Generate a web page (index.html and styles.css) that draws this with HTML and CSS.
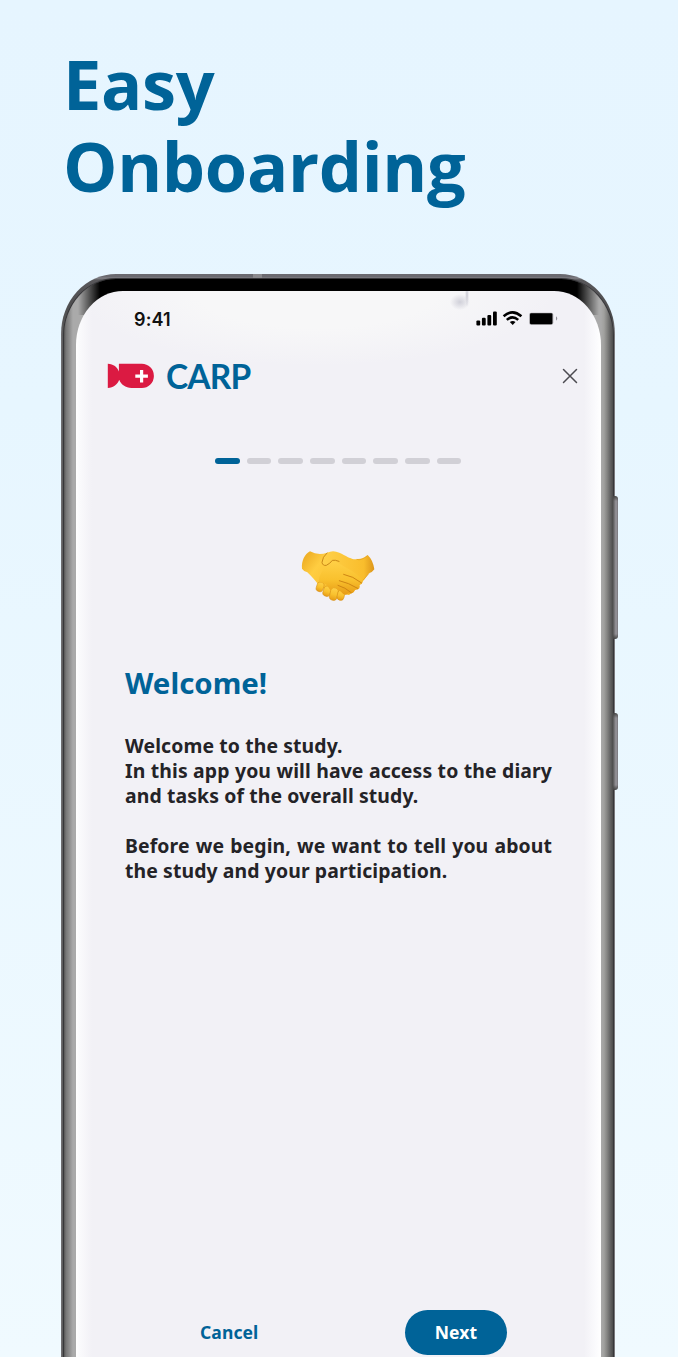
FILE: index.html
```html
<!DOCTYPE html>
<html lang="en">
<head>
<meta charset="utf-8">
<title>CARP – Easy Onboarding</title>
<link rel="stylesheet" href="styles.css">
</head>
<body>
<main class="poster">
  <h1 class="headline">Easy<br>Onboarding</h1>
  <div class="phone">
    <span class="side-key volume"></span>
    <span class="side-key power"></span>
    <span class="antenna"></span>
    <div class="bezel">
      <div class="screen">
        <div class="statusbar">
          <span class="clock">9:41</span>
          <svg class="status-icons" width="84" height="18" viewBox="0 0 84 18">
            <rect x="1.4" y="11.5" width="3.8" height="5" rx="1.1"/>
            <rect x="6.9" y="8.8" width="3.8" height="7.7" rx="1.1"/>
            <rect x="12.4" y="6" width="3.8" height="10.5" rx="1.1"/>
            <rect x="18" y="2.4" width="3.8" height="14.1" rx="1.1"/>
            <g fill="none" stroke="#000" stroke-width="2.5"><path d="M28.6 7.3Q37.5-.6 46.4 7.3"/><path d="M31.8 10.9Q37.5 5.8 43.2 10.9"/></g>
            <path d="M34.8 13Q37.7 11 40.5 13L37.7 16Z"/>
            <rect x="54.1" y="3.8" width="24.2" height="12" rx="2" fill="#aaa9ad"/>
            <rect x="55" y="4.3" width="22.4" height="11" rx="1.2"/>
            <path d="M81 7.3Q83.5 9.5 81 11.7Z" fill="#929198"/>
          </svg>
        </div>
        <header class="appbar">
          <svg class="fish" width="48" height="26" viewBox="0 0 48 26">
            <path fill="#db1a42" d="M.8.8C6.500 1.100 10.400 4.200 11.900 8.600V.8H34.800A12.100 12.100 0 0 1 34.800 25H24.500C18.500 25 14 21.500 12.200 16.800C10.500 21.500 6.500 24.700.8 25Z"/>
            <path fill="#fff" d="M33 7h3.200v4.500H40.900v3.300H36.200v4.700H33v-4.700H28.300v-3.300H33Z"/>
          </svg>
          <span class="brand">CARP</span>
          <svg class="close" width="16" height="16" viewBox="0 0 16 16"><path d="M1.5 1.500l13 13M14.500 1.500l-13 13"/></svg>
        </header>
        <div class="steps"><i class="step active"></i><i class="step"></i><i class="step"></i><i class="step"></i><i class="step"></i><i class="step"></i><i class="step"></i><i class="step"></i></div>
        <svg class="handshake" width="76" height="54" viewBox="34 42 228 162">
          <defs>
            <linearGradient id="skin" x1="0" y1="0" x2="0" y2="1"><stop offset="0" stop-color="#ffd047"/><stop offset=".55" stop-color="#f9c12e"/><stop offset="1" stop-color="#e79b15"/></linearGradient>
            <linearGradient id="left" x1="0" y1="0" x2="1" y2=".6"><stop offset="0" stop-color="#e9a51d"/><stop offset=".35" stop-color="#ffcd41"/><stop offset="1" stop-color="#f6b928"/></linearGradient>
            <linearGradient id="right" x1="0" y1="0" x2="1" y2="0"><stop offset="0" stop-color="#ffd14a"/><stop offset=".8" stop-color="#f9bd2c"/><stop offset="1" stop-color="#dc951a"/></linearGradient>
          </defs>
          <path fill="url(#left)" d="M61 49C45 57 35 78 37 101Q42 109 53 112C67 125 77 138 84 146L112 169L178 180L205 158L190 73L112 53Q85 62 61 49Z"/>
          <g fill="url(#skin)" stroke="#d58c12" stroke-width="1.6">
            <rect x="81" y="141" width="21" height="29" rx="10" transform="rotate(18 91 155)"/>
            <rect x="101" y="153" width="23" height="31" rx="11" transform="rotate(18 112 168)"/>
            <rect x="121" y="158" width="23" height="38" rx="11" transform="rotate(12 132 177)"/>
            <rect x="143" y="165" width="21" height="31" rx="10" transform="rotate(12 153 181)"/>
          </g>
          <path fill="url(#skin)" d="M87 138Q90 113 112 91C125 70 165 80 186 83L220 122Q224 144 210 150Q213 165 196 164Q191 178 176 175Q165 185 154 170L133 156L122 166L111 149Z"/>
          <path fill="url(#right)" d="M112 53Q130 44 149 53C170 63 189 76 202 72Q220 73 234 60Q250 75 254 103Q248 112 238 115L221 137Q195 110 171 99L132 76Q124 83 118 89Q105 97 97 86Q98 66 112 53Z"/>
          <path fill="none" stroke="#c98717" stroke-width="3" stroke-linecap="round" d="M112 54Q98 66 97 82Q99 93 110 91Q121 86 128 76Q136 74 148 79"/>
          <g fill="none" stroke="#ce8513" stroke-width="3" stroke-linecap="round"><path d="M162 118Q190 123 216 144"/><path d="M149 137Q176 143 204 160"/><path d="M145 151Q166 157 185 173"/></g>
          <path fill="none" stroke="#e3a01f" stroke-width="2" d="M201 73Q215 78 233 62M220 136L238 115"/>
        </svg>
        <h2 class="title">Welcome!</h2>
        <div class="copy">
          <p class="line">Welcome to the study.</p>
          <p class="line full">In this app you will have access to the diary</p>
          <p class="line">and tasks of the overall study.</p>
          <p class="line gap full">Before we begin, we want to tell you about</p>
          <p class="line">the study and your participation.</p>
        </div>
        <footer class="actions"><span class="cancel">Cancel</span><span class="next">Next</span></footer>
      </div>
    </div>
  </div>
</main>
</body>
</html>
```
FILE: styles.css
```css
* { box-sizing: border-box; }
body { margin: 0; font-family: "Noto Sans", "Open Sans", sans-serif; }
.poster { height: 1357px; overflow: hidden; background: linear-gradient(#e6f5ff 0, #e7f6ff 30%, #f0faff 100%); }
.headline { margin: 0; padding: 43px 0 0 63px; height: 274px; font: 700 68.5px/82px "Open Sans", sans-serif; letter-spacing: -.35px; color: #006398; }
.phone { position: relative; width: 554px; height: 1083px; margin-left: 61px; padding: 5px 2px 0 3px; border-radius: 55px 55px 0 0 / 60px 60px 0 0; background: linear-gradient(#6b6a70 0 3px, #858489 4px, #58575a 6px, transparent 65px), linear-gradient(90deg, #77767a 0, #555 2px, #444 8px, #444 calc(100% - 3px), #858387 100%); }
.bezel { height: 100%; padding: 12px 12px 0; border-radius: 52px 52px 0 0 / 57px 57px 0 0; box-shadow: 0 0 0 1px #37373a; background:
  linear-gradient(90deg, transparent 14px, #000 36px, #000 calc(100% - 36px), transparent calc(100% - 14px)) 0 0 / 100% 36px no-repeat,
  linear-gradient(90deg, #555 0, #777 2px, #8b8b8b 5px, #aaa 9px, #aaa 12px, #aaa calc(100% - 12px), #a0a09e calc(100% - 9px), #858583 calc(100% - 6px), #666 calc(100% - 3px), #4c4c4c 100%); }
.screen { height: 100%; display: flex; flex-direction: column; border-radius: 47px 47px 0 0 / 54px 54px 0 0; background:
  radial-gradient(ellipse 10px 8px at 384px 11px, #d0d0d9, transparent),
  radial-gradient(ellipse 2px 12px at 391px 4px, #c8c8d2, transparent),
  radial-gradient(ellipse 240px 75px at 240px 0, #f7f7f8 50%, transparent),
  linear-gradient(90deg, #fff 0, #fafafc 4px, #f2f1f6 16px, #f2f1f6 calc(100% - 17px), #fbfbfd calc(100% - 5px), #fff 100%); }
.side-key { position: absolute; left: 552px; width: 5px; border-radius: 0 3px 3px 0; background: linear-gradient(#444, transparent 5px calc(100% - 5px), #444), linear-gradient(90deg, #555, #99979d 60%, #77767c); }
.volume { top: 222px; height: 143px; }
.power { top: 439px; height: 77px; }
.antenna { position: absolute; left: 192px; top: 0; width: 9px; height: 4px; background: #8a898d; }
.statusbar { height: 55px; padding: 18px 42px 0 58px; display: flex; justify-content: space-between; }
.clock { font: 600 18px/22px Inter, sans-serif; letter-spacing: .15px; color: #111; }
.appbar { height: 60px; padding: 0 23px 0 31px; display: flex; align-items: center; }
.fish { flex: none; }
.brand { flex: 1; margin: -1px 0 0 11px; font: 700 33.5px/40px Lato, sans-serif; letter-spacing: -.8px; color: #006398; }
.close { fill: none; stroke: #4c4b51; stroke-width: 1.5; stroke-linecap: round; }
.steps { display: flex; gap: 7.1px; margin: 52px 0 0 139px; }
.step { width: 24.6px; height: 6px; border-radius: 3px; background: #d1d0d6; }
.step.active { background: #006398; }
.handshake { margin: 85px 0 0 225px; flex: none; }
.title { margin: 61px 0 0 49px; font: 700 29.4px/38px "Noto Sans", sans-serif; color: #006398; }
.copy { width: 427px; margin: 31px 0 0 49px; color: #242327; font-weight: 700; font-size: 19.4px; letter-spacing: .11px; }
.line { margin: 0; height: 25px; line-height: 25px; white-space: nowrap; }
.line.full { text-align: justify; text-align-last: justify; }
.line.gap { margin-top: 25px; }
.actions { margin: 427px 94px 0 124px; display: flex; justify-content: space-between; align-items: center; font-weight: 700; font-size: 17.5px; }
.cancel { margin-top: -2px; color: #006398; letter-spacing: .1px; }
.next { width: 102px; height: 45px; border-radius: 23px; background: #006398; color: #fff; text-align: center; line-height: 44px; letter-spacing: .1px; }
```
